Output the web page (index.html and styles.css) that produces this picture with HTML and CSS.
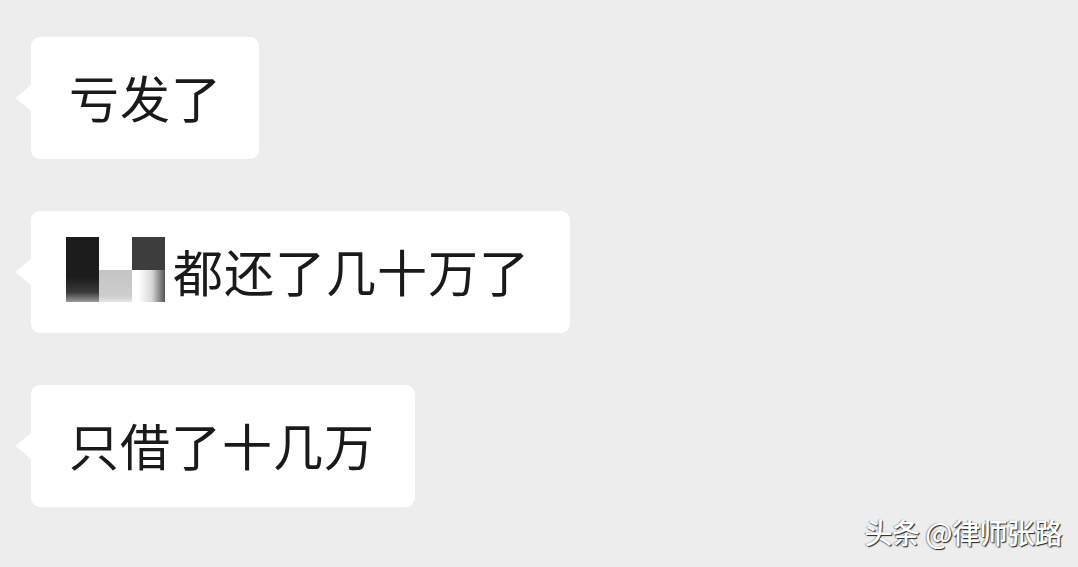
FILE: index.html
```html
<!doctype html>
<html lang="zh-CN">
<head>
	<meta charset="utf-8">
	<meta name="viewport" content="width=device-width, initial-scale=1.0">
	<title>聊天</title>
	<link rel="stylesheet" href="styles.css">
</head>
<body>
<div class="chat">
	<div class="bubble b1">亏发了</div>
	<div class="bubble"><span class="mosaic"><i class="m1"></i><i class="m2"></i><i class="m3"></i><i class="m4"></i></span>都还了几十万了</div>
	<div class="bubble">只借了十几万</div>
</div>
<div class="mark">头条 @律师张路</div>
</body>
</html>
```
FILE: styles.css
```css
body {
	margin: 0;
	height: 567px;
	background: #ededed;
	font-family: "Noto Sans CJK SC", "Noto Sans", sans-serif;
	position: relative;
	overflow: hidden;
}

.chat {
	display: flex;
	flex-direction: column;
	align-items: flex-start;
	gap: 52px;
	padding: 37px 0 0 31px;
}

.bubble {
	position: relative;
	display: flex;
	align-items: center;
	height: 122px;
	box-sizing: border-box;
	padding: 0 40px 5px 38px;
	background: #fff;
	border-radius: 9px;
	color: #1a1a1a;
	font-size: 50px;
	letter-spacing: 1px;
	line-height: 1;
}
.b1 { padding-right: 37px; }
.bubble::before {
	content: "";
	position: absolute;
	left: -15px;
	top: 47px;
	width: 16px;
	height: 28px;
	background: #fff;
	clip-path: polygon(100% 0, 4% 46%, 0 50%, 4% 54%, 100% 100%);
}

.mosaic {
	display: grid;
	grid-template-columns: repeat(3, 33px);
	grid-template-rows: 33px 32px;
	margin: 0 8px 0 -3px;
}
.mosaic i { display: block; }
.m1 {
	grid-row: 1 / 3;
	background: linear-gradient(#1c1c1c 0, #1c1c1c 62%, #3a3a3a 85%, #9a9a9a 100%);
}
.m2 {
	grid-column: 2;
	grid-row: 2;
	background: linear-gradient(#c4c4c4, #cdcdcd 80%, #e6e6e6);
}
.m3 {
	grid-column: 3;
	grid-row: 1;
	background: #3d3d3d;
}
.m4 {
	grid-column: 3;
	grid-row: 2;
	background: linear-gradient(90deg, #fff 20%, #d8d8d8 60%, #555 100%);
}

.mark {
	position: absolute;
	right: 16px;
	bottom: 15px;
	color: #fff;
	font-size: 28px;
	font-weight: 500;
	letter-spacing: -0.5px;
	text-shadow: 1px 1px 1px #222, -1px 0 1px rgba(0,0,0,.35);
}
```
